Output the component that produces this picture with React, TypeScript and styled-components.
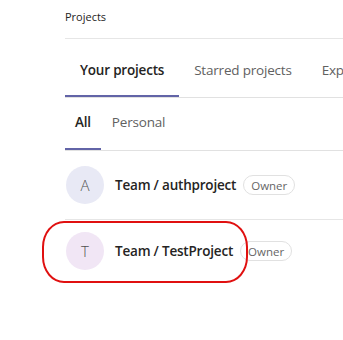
import React from "react";
import styled, { createGlobalStyle } from "styled-components";

const GlobalStyle = createGlobalStyle`
  body {
    margin: 0;
    background: #ffffff;
    font-family: "Segoe UI", "Open Sans", "Noto Sans", sans-serif;
    color: #252423;
  }
`;

const Page = styled.div`
  position: relative;
  padding-left: 65px;
  width: 343px;
  height: 340px;
  box-sizing: border-box;
  overflow: hidden;
`;

const Header = styled.div`
  height: 39px;
  display: flex;
  align-items: center;
  font-size: 11px;
  color: #252423;
  border-bottom: 1px solid #e6e6e6;
  padding-bottom: 6px;
  box-sizing: border-box;
`;

const TabBar = styled.div<{ $height: number }>`
  display: flex;
  height: ${(p) => p.$height}px;
  border-bottom: 1px solid #e1e1e1;
  white-space: nowrap;
`;

const Tab = styled.div<{ $active?: boolean; $pad: number; $shift: number }>`
  display: flex;
  align-items: center;
  box-sizing: border-box;
  padding: 0 ${(p) => p.$pad}px;
  padding-top: ${(p) => Math.max(p.$shift, 0) * 2}px;
  padding-bottom: ${(p) => Math.max(-p.$shift, 0) * 2}px;
  font-size: 13.5px;
  font-weight: ${(p) => (p.$active ? 600 : 400)};
  color: ${(p) => (p.$active ? "#252423" : "#616161")};
  box-shadow: ${(p) => (p.$active ? "inset 0 -2px 0 #6264a7" : "none")};
  letter-spacing: -0.2px;
`;

const Row = styled.div<{ $height: number; $divider?: boolean }>`
  display: flex;
  align-items: center;
  height: ${(p) => p.$height}px;
  border-bottom: ${(p) => (p.$divider ? "1px solid #e6e6e6" : "none")};
`;

const Avatar = styled.div<{ $bg: string }>`
  width: 38px;
  height: 38px;
  border-radius: 50%;
  background: ${(p) => p.$bg};
  display: flex;
  align-items: center;
  justify-content: center;
  font-size: 15px;
  font-weight: 300;
  color: #505050;
  margin-left: 1px;
  margin-right: 11px;
`;

const Name = styled.span`
  font-size: 13.5px;
  font-weight: 600;
  color: #252423;
  letter-spacing: -0.2px;
`;

const Badge = styled.span`
  margin-left: 7px;
  height: 20px;
  display: inline-flex;
  align-items: center;
  padding: 0 7px;
  border: 1px solid #e1e1e1;
  border-radius: 10px;
  font-size: 11.5px;
  color: #666;
  box-sizing: border-box;
`;

const Annotation = styled.div`
  position: absolute;
  left: 42px;
  top: 221px;
  width: 206px;
  height: 62px;
  box-sizing: border-box;
  border: 2px solid #e01010;
  border-radius: 22px / 26px;
  pointer-events: none;
`;

const projects = [
  { letter: "A", name: "Team / authproject", bg: "#e8e9f5", height: 68 },
  { letter: "T", name: "Team / TestProject", bg: "#f1e6f5", height: 62 },
];

export default function App() {
  return (
    <>
      <GlobalStyle />
      <Page>
        <Header>Projects</Header>
        <TabBar $height={58}>
          <Tab $active $pad={15} $shift={2}>Your projects</Tab>
          <Tab $pad={15} $shift={2}>Starred projects</Tab>
          <Tab $pad={15} $shift={2}>Explore projects</Tab>
        </TabBar>
        <TabBar $height={52}>
          <Tab $active $pad={10} $shift={-2}>All</Tab>
          <Tab $pad={11} $shift={-2}>Personal</Tab>
        </TabBar>
        {projects.map((p, i) => (
          <Row key={p.name} $height={p.height} $divider={i === 0}>
            <Avatar $bg={p.bg}>{p.letter}</Avatar>
            <Name>{p.name}</Name>
            <Badge>Owner</Badge>
          </Row>
        ))}
        <Annotation />
      </Page>
    </>
  );
}
